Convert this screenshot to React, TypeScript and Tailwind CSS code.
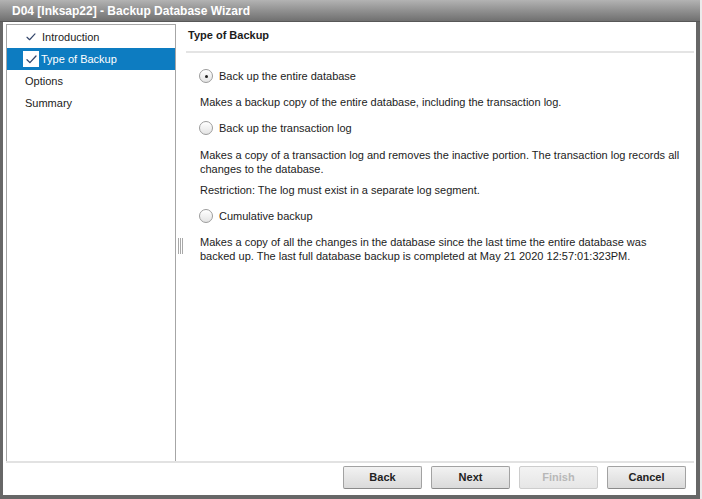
import React from 'react';

function Check({ className }: { className?: string }) {
  return (
    <svg viewBox="0 0 11 9" className={className} fill="none">
      <path d="M1 4.8 L3.9 7.6 L10 1" stroke="#34466b" strokeWidth="1.3" strokeLinecap="round" strokeLinejoin="round" />
    </svg>
  );
}

function Radio({ checked, label }: { checked?: boolean; label: string }) {
  return (
    <div className="flex items-center h-[18px]">
      <span className="w-[14px] h-[14px] rounded-full border border-[#9c9c9c] bg-gradient-to-b from-white to-[#e4e4e4] flex items-center justify-center shadow-[inset_0_1px_0_#fff]">
        {checked && <span className="w-[3px] h-[3px] rounded-full bg-[#222]" />}
      </span>
      <span className="ml-[6px]">{label}</span>
    </div>
  );
}

function Btn({ label, disabled }: { label: string; disabled?: boolean }) {
  return (
    <button
      className={
        disabled
          ? 'w-[79px] h-[23px] rounded-[2px] border border-[#cdcdcd] bg-gradient-to-b from-[#f3f3f3] to-[#e6e6e6] text-[#b8b8b8] font-bold text-[11px]'
          : 'w-[79px] h-[23px] rounded-[2px] border border-[#a2a2a2] border-b-[#8a8a8a] bg-gradient-to-b from-[#f2f2f2] to-[#dadada] text-[#222] font-bold text-[11px]'
      }
    >
      {label}
    </button>
  );
}

export default function App() {
  const nav = [
    { label: 'Introduction', done: true },
    { label: 'Type of Backup', done: true, active: true },
    { label: 'Options' },
    { label: 'Summary' },
  ];

  return (
    <div className="w-[702px] h-[499px] bg-[#ebebeb] font-['Liberation_Sans',Arial,sans-serif] text-[11px] text-[#1c1c1c]">
      <div className="w-[700px] h-[499px] bg-[#676767] flex flex-col">
        {/* title bar */}
        <div className="h-[22px] bg-gradient-to-b from-[#b3b3b3] to-[#707070] border-b border-[#585858] flex items-center pl-[12px]">
          <span className="text-white font-bold text-[12px] leading-none">D04 [Inksap22] - Backup Database Wizard</span>
        </div>

        {/* body */}
        <div className="flex-1 ml-[3px] mr-[4px] mb-[4px] bg-white flex flex-col">
          <div className="flex-1 flex pt-[2px] pl-[3px] pr-[2px]">
            {/* left nav */}
            <div className="w-[170px] border-l border-t border-r border-[#a6a6a6] pt-[1px]">
              {nav.map((n) => (
                <div
                  key={n.label}
                  className={
                    n.active
                      ? 'h-[22px] flex items-center bg-[#0d7cc1] text-white pl-[16px]'
                      : 'h-[22px] flex items-center pl-[18px]'
                  }
                >
                  {n.done && n.active && (
                    <span className="w-[16px] h-[16px] bg-white flex items-center justify-center mr-[2px]">
                      <Check className="w-[11px] h-[9px]" />
                    </span>
                  )}
                  {n.done && !n.active && (
                    <span className="w-[17px] flex items-center pl-[1px]">
                      <Check className="w-[10px] h-[8px]" />
                    </span>
                  )}
                  <span>{n.label}</span>
                </div>
              ))}
            </div>

            {/* splitter grip */}
            <div className="w-[9px] flex items-center justify-center">
              <div className="flex gap-[1px] h-[16px] mt-[6px]">
                <span className="w-[1px] h-full bg-[#a8a8a8]" />
                <span className="w-[1px] h-full bg-[#a8a8a8]" />
                <span className="w-[1px] h-full bg-[#a8a8a8]" />
              </div>
            </div>

            {/* content */}
            <div className="flex-1 flex flex-col">
              <div className="h-[27px] pl-[3px] pt-[4px] font-bold leading-[14px]">Type of Backup</div>
              <div className="h-[2px] bg-[#e4e4e4] ml-[1px]" />
              <div className="pl-[14px] pr-[10px] leading-[14px]">
                <div className="mt-[14px]">
                  <Radio checked label="Back up the entire database" />
                </div>
                <p className="mt-[10px] pl-[1px]">Makes a backup copy of the entire database, including the transaction log.</p>
                <div className="mt-[10px]">
                  <Radio label="Back up the transaction log" />
                </div>
                <p className="mt-[11px] pl-[1px]">
                  Makes a copy of a transaction log and removes the inactive portion. The transaction log records all
                  changes to the database.
                </p>
                <p className="mt-[7px] pl-[1px]">Restriction: The log must exist in a separate log segment.</p>
                <div className="mt-[10px]">
                  <Radio label="Cumulative backup" />
                </div>
                <p className="mt-[10px] pl-[1px] w-[470px]">
                  Makes a copy of all the changes in the database since the last time the entire database was backed up.
                  The last full database backup is completed at May 21 2020 12:57:01:323PM.
                </p>
              </div>
            </div>
          </div>

          {/* footer */}
          <div className="h-[34px] flex flex-col">
            <div className="h-[2px] bg-[#e2e2e2] ml-[3px] mr-[2px]" />
            <div className="flex justify-end gap-[9px] pr-[10px] pt-[3px]">
              <Btn label="Back" />
              <Btn label="Next" />
              <Btn label="Finish" disabled />
              <Btn label="Cancel" />
            </div>
          </div>
        </div>
      </div>
    </div>
  );
}
